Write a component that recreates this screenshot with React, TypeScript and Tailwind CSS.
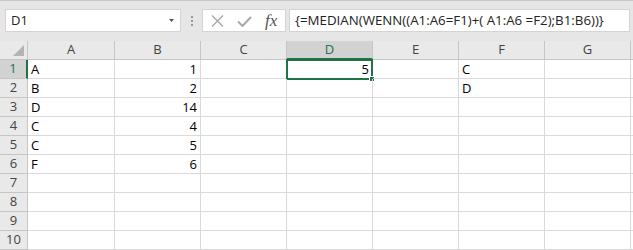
const cols = ["A", "B", "C", "D", "E", "F", "G"]

type Cell = { v: string; right?: boolean }

const data: Record<string, Cell> = {
    A1: { v: "A" },
    A2: { v: "B" },
    A3: { v: "D" },
    A4: { v: "C" },
    A5: { v: "C" },
    A6: { v: "F" },
    B1: { v: "1", right: true },
    B2: { v: "2", right: true },
    B3: { v: "14", right: true },
    B4: { v: "4", right: true },
    B5: { v: "5", right: true },
    B6: { v: "6", right: true },
    D1: { v: "5", right: true },
    F1: { v: "C" },
    F2: { v: "D" },
}

const font = { fontFamily: '"Open Sans", "Noto Sans", sans-serif' }

const FormulaBar = () => (
    <div className="relative h-[41px] bg-[#e6e6e6] border-t border-[#c8c8c8] flex items-start pt-[8px]">
        {/* name box */}
        <div className="ml-[5px] w-[176px] h-[23px] bg-white border border-[#d4d4d4] flex items-center justify-between pl-[5px] pr-[6px]">
            <span className="text-[13px] text-[#222]">D1</span>
            <svg width="5" height="3" viewBox="0 0 5 3">
                <path d="M0 0 H5 L2.5 3 Z" fill="#555" />
            </svg>
        </div>
        {/* grip dots */}
        <div className="ml-[10px] w-[2px] h-[23px] flex flex-col justify-center gap-[2px]">
            <div className="w-[2px] h-[2px] bg-[#9a9a9a]" />
            <div className="w-[2px] h-[2px] bg-[#9a9a9a]" />
            <div className="w-[2px] h-[2px] bg-[#9a9a9a]" />
        </div>
        {/* buttons */}
        <div className="ml-[9px] w-[84px] h-[23px] bg-white border border-[#d4d4d4] flex items-center">
            <svg className="ml-[8px]" width="13" height="12" viewBox="0 0 13 12">
                <path d="M1 0.5 L12 11.5 M12 0.5 L1 11.5" stroke="#a8a8a8" strokeWidth="1.4" fill="none" />
            </svg>
            <svg className="ml-[13px] mt-[2px]" width="15" height="11" viewBox="0 0 15 11">
                <path d="M1 5.5 L5.5 10 L14 1" stroke="#a8a8a8" strokeWidth="2" fill="none" />
            </svg>
            <span
                className="ml-[13px] text-[17px] italic text-[#555] leading-none"
                style={{ fontFamily: '"Liberation Serif", serif' }}
            >
                fx
            </span>
        </div>
        {/* formula input */}
        <div className="ml-[3px] w-[341px] h-[23px] bg-white border border-[#d4d4d4] flex items-center pl-[5px]">
            <span className="text-[13.3px] text-[#222] whitespace-nowrap">
                {"{=MEDIAN(WENN((A1:A6=F1)+( A1:A6 =F2);B1:B6))}"}
            </span>
        </div>
    </div>
)

const App = () => {
    const rows = Array.from({ length: 10 }, (_, i) => i + 1)
    return (
        <div className="w-[633px] h-[250px] overflow-hidden bg-white" style={font}>
            <FormulaBar />
            <div className="grid grid-cols-[28px_87px_86px_86px_86px_86px_86px_86px_1fr]">
                {/* header row */}
                <div className="h-[19px] bg-[#e9e9e9] border-b border-r border-[#c6c6c6] relative">
                    <svg className="absolute right-[3px] bottom-[3px]" width="11" height="11" viewBox="0 0 11 11">
                        <path d="M11 0 V11 H0 Z" fill="#b4b4b4" />
                    </svg>
                </div>
                {cols.map((c) => (
                    <div
                        key={c}
                        className={
                            c === "D"
                                ? "h-[19px] bg-[#d2d2d2] border-b-2 border-b-[#217346] border-r border-r-[#c6c6c6] flex items-center justify-center text-[13px] text-[#217346]"
                                : "h-[19px] bg-[#e9e9e9] border-b border-r border-[#c6c6c6] flex items-center justify-center text-[13px] text-[#444]"
                        }
                    >
                        {c}
                    </div>
                ))}
                <div className="h-[19px] bg-[#e9e9e9] border-b border-[#c6c6c6]" />

                {rows.map((r) => (
                    <div key={r} className="contents">
                        <div
                            className={
                                r === 1
                                    ? "h-[19px] bg-[#d2d2d2] border-b border-b-[#c6c6c6] border-r-2 border-r-[#217346] flex items-center justify-center text-[13px] text-[#217346]"
                                    : "h-[19px] bg-[#e9e9e9] border-b border-r border-[#c6c6c6] flex items-center justify-center text-[13px] text-[#444]"
                            }
                        >
                            {r}
                        </div>
                        {cols.map((c) => {
                            const cell = data[`${c}${r}`]
                            return (
                                <div
                                    key={c}
                                    className={
                                        "relative h-[19px] border-b border-r border-[#dadada] flex items-end text-[13px] leading-[17px] text-black " +
                                        (cell?.right ? "justify-end pr-[3px]" : "pl-[3px]")
                                    }
                                >
                                    {cell?.v}
                                    {c === "D" && r === 1 && (
                                        <div className="absolute -left-[1px] -top-[1px] w-[87px] h-[21px] border-2 border-[#217346]">
                                            <div className="absolute -right-[4px] -bottom-[4px] w-[6px] h-[6px] bg-[#217346] border border-white" />
                                        </div>
                                    )}
                                </div>
                            )
                        })}
                        <div className="h-[19px] border-b border-[#dadada]" />
                    </div>
                ))}
            </div>
        </div>
    )
}

export default App
